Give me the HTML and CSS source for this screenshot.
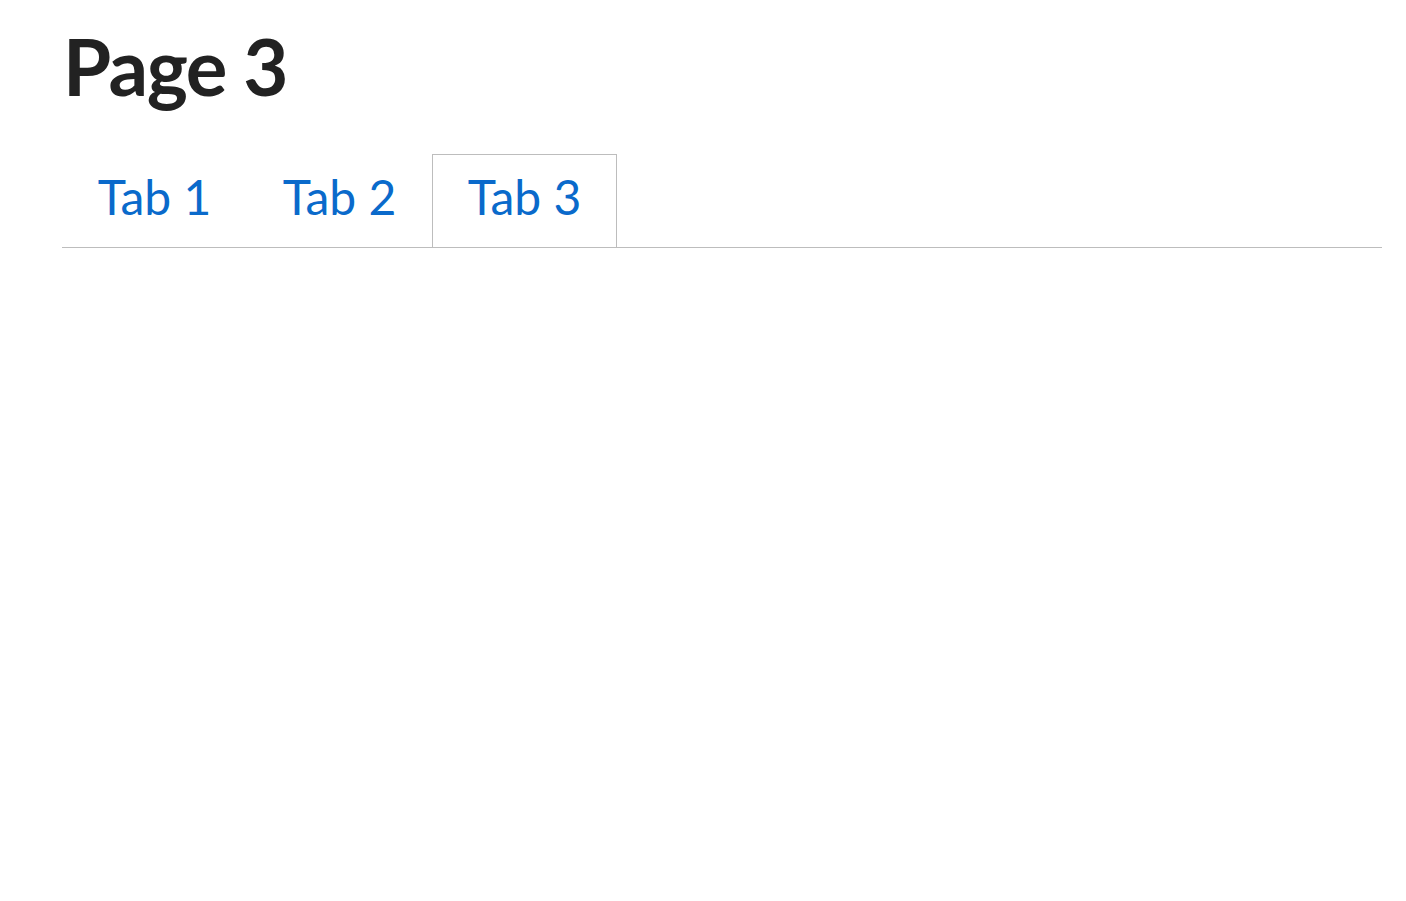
FILE: index.html
```html
<!DOCTYPE html>
<html lang="en">
<head>
  <meta charset="UTF-8">
  <title>Page 3</title>
  <link rel="stylesheet" href="styles.css">
</head>
<body>

<h1 class="page-title">Page 3</h1>

<ul class="tabs">
  <li class="tab"><a href="#">Tab 1</a></li>
  <li class="tab"><a href="#">Tab 2</a></li>
  <li class="tab active"><a href="#">Tab 3</a></li>
</ul>

</body>
</html>
```

FILE: styles.css
```css
/* ----- page ----- */
body {
  font-family: Lato, "Open Sans", sans-serif;
  margin: 0;
  padding: 0 24px 0 62px;
  color: #222;
  background: #fff;
}

.page-title {
  font-size: 78px;
  font-weight: bold;
  line-height: 1;
  margin: 27px 0 0 1px;
  letter-spacing: -1.5px;
}

/* ----- tabs ----- */
.tabs {
  display: flex;
  list-style: none;
  margin: 49px 0 0;
  padding: 0;
  border-bottom: 1px solid #bdbdbd;
}

.tab {
  width: 185px;
  height: 93px;
  box-sizing: border-box;
  display: flex;
  align-items: center;
  justify-content: center;
  border: 1px solid transparent;
  border-bottom: none;
}

.tab a {
  font-size: 48px;
  color: #0a6acb;
  text-decoration: none;
  padding-bottom: 9px;
}

.tab.active {
  border-color: #bdbdbd;
}
```
